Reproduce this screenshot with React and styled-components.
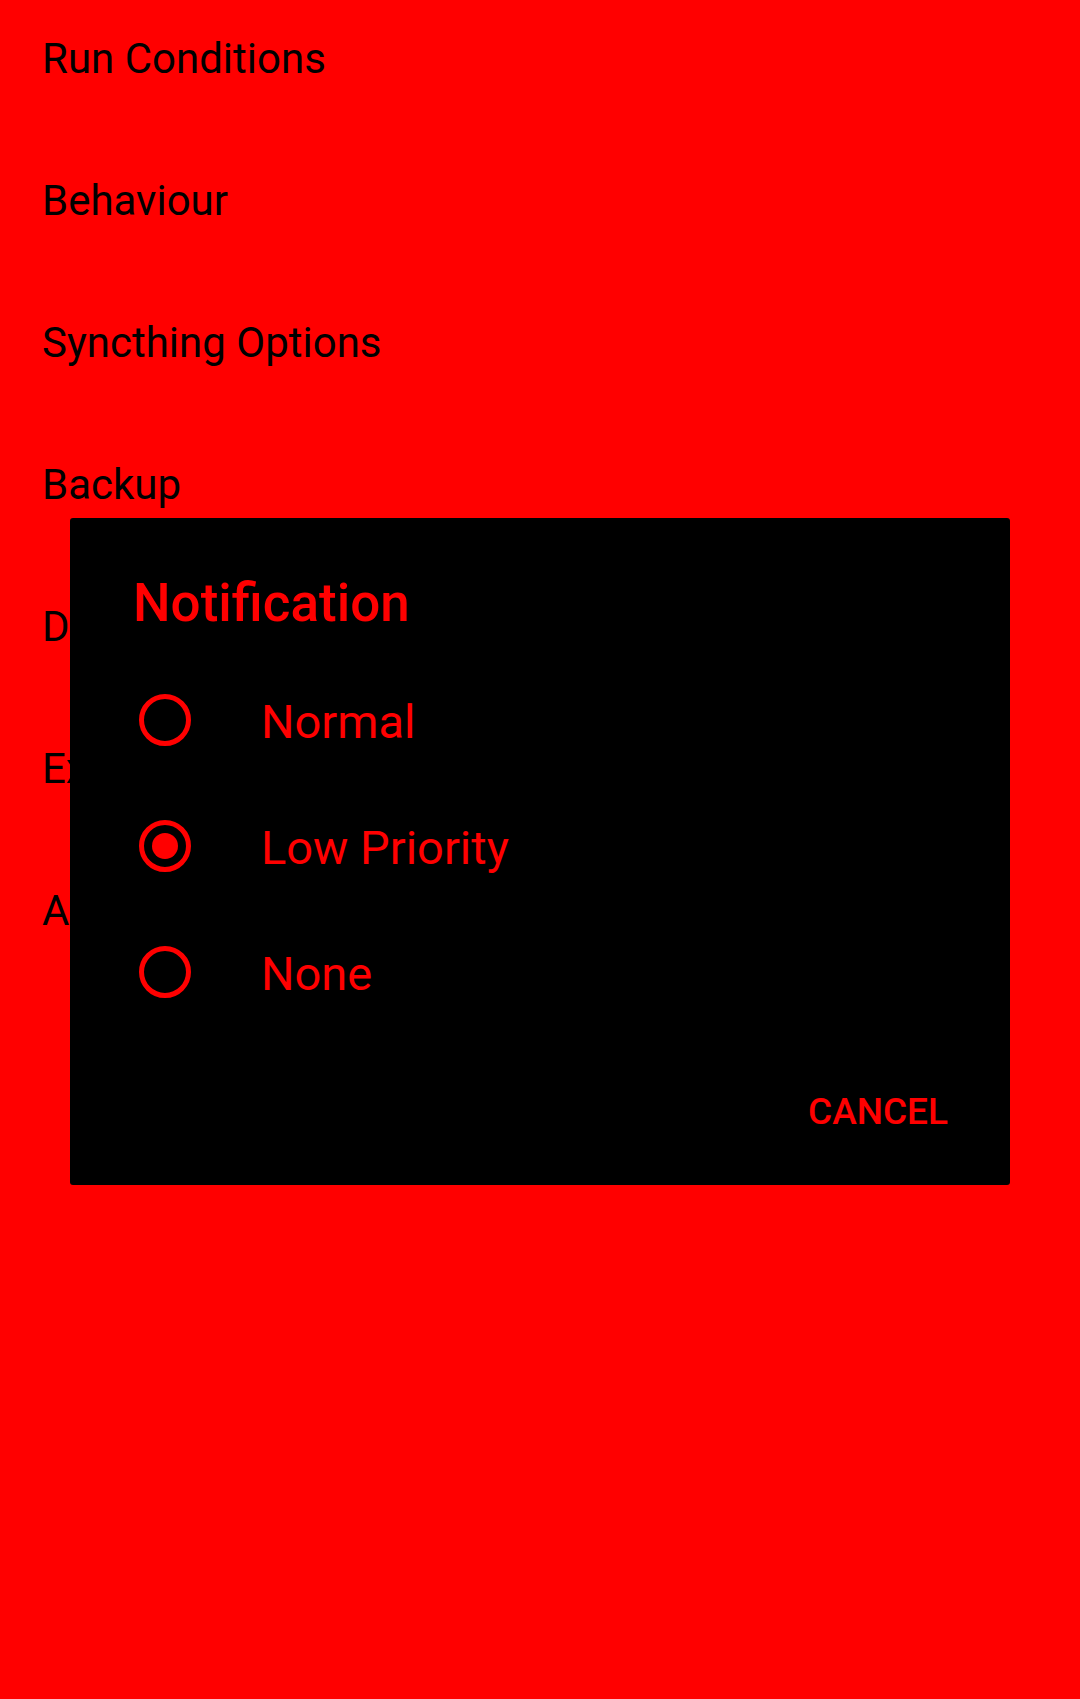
import React from "react";
import styled, { createGlobalStyle } from "styled-components";

const GlobalStyle = createGlobalStyle`
    html, body {
        margin: 0;
        padding: 0;
        background: #ff0000;
    }

    body {
        font-family: Roboto, "Liberation Sans", sans-serif;
    }
`;

const Page = styled.div`
    width: 1080px;
    height: 1699px;
    background: #ff0000;
    overflow: hidden;
`;

const List = styled.ul`
    list-style: none;
    margin: 0;
    padding: 0;
`;

const Row = styled.li`
    height: 142px;
    box-sizing: border-box;
    padding: 34px 0 0 42px;
    font-size: 42px;
    line-height: 50px;
    color: #000;
`;

const Overlay = styled.div`
    position: fixed;
    inset: 0;
    padding-top: 4px;
    display: flex;
    align-items: center;
    justify-content: center;
`;

const Dialog = styled.div`
    width: 940px;
    box-sizing: border-box;
    background: #000;
    border-radius: 3px;
    padding: 53px 0 51px;
    display: flex;
    flex-direction: column;
`;

const Title = styled.h2`
    margin: 0 0 22px;
    padding-left: 63px;
    font-size: 53px;
    line-height: 64px;
    font-weight: 500;
    color: #ff0000;
`;

const Option = styled.label`
    height: 126px;
    display: flex;
    align-items: center;
    padding-left: 69px;
    gap: 70px;
    font-size: 47px;
    color: #ff0000;
`;

const Radio = styled.span`
    width: 52px;
    height: 52px;
    box-sizing: border-box;
    border: 5px solid #ff0000;
    border-radius: 50%;
    display: flex;
    align-items: center;
    justify-content: center;
    flex-shrink: 0;

    &::after {
        content: "";
        width: ${(p) => (p.checked ? "26px" : "0")};
        height: ${(p) => (p.checked ? "26px" : "0")};
        border-radius: 50%;
        background: #ff0000;
    }
`;

const OptionText = styled.span`
    padding-top: 3px;
`;

const Actions = styled.div`
    display: flex;
    justify-content: flex-end;
    padding: 0 62px 0 0;
    margin-top: 55px;
`;

const TextButton = styled.button`
    background: none;
    border: none;
    padding: 0;
    font-family: inherit;
    font-size: 37px;
    line-height: 44px;
    font-weight: 500;
    color: #ff0000;
    text-transform: uppercase;
`;

const sections = [
    "Run Conditions",
    "Behaviour",
    "Syncthing Options",
    "Backup",
    "Debug",
    "Experimental",
    "About",
];

const options = ["Normal", "Low Priority", "None"];

const App = () => {
    const selected = "Low Priority";

    return (
        <Page>
            <GlobalStyle />
            <List>
                {sections.map((s) => (
                    <Row key={s}>{s}</Row>
                ))}
            </List>
            <Overlay>
                <Dialog>
                    <Title>Notification</Title>
                    {options.map((o) => (
                        <Option key={o}>
                            <Radio checked={o === selected} />
                            <OptionText>{o}</OptionText>
                        </Option>
                    ))}
                    <Actions>
                        <TextButton>Cancel</TextButton>
                    </Actions>
                </Dialog>
            </Overlay>
        </Page>
    );
};

export default App;
